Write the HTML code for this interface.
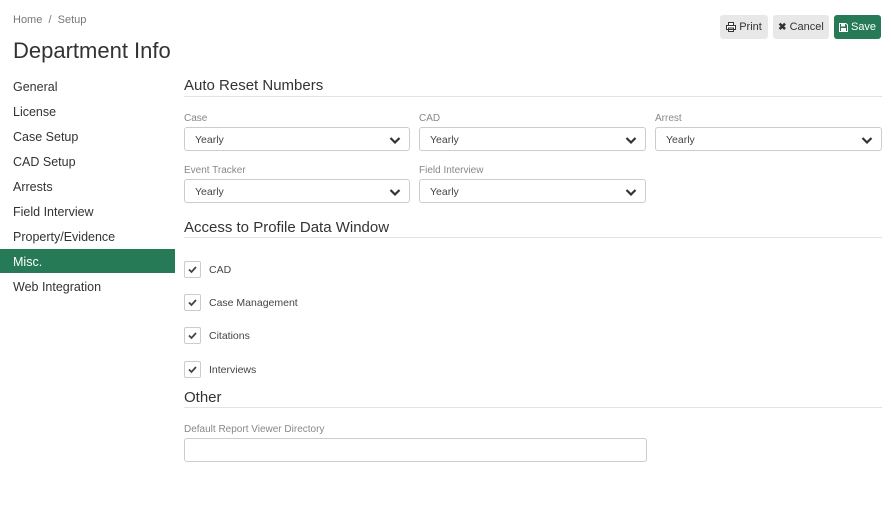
<!DOCTYPE html><html><head><style>
body{margin:0;width:891px;height:521px;background:#fff;font-family:"Liberation Sans",sans-serif;color:#333;position:relative;overflow:hidden}
.a{position:absolute;white-space:nowrap}
.bc{font-size:11px;color:#777;top:14px;left:13px}
h1{position:absolute;margin:0;top:38px;left:13px;font-size:22px;font-weight:normal;color:#333}
.nav{left:13px;font-size:12.5px;color:#333}
.btn{position:absolute;top:15px;height:24px;border-radius:3px;background:#e8e8e8;font-size:11px;color:#333;display:flex;align-items:center;justify-content:center}
.h{left:184px;font-size:15px;color:#333}
.ln{position:absolute;left:184px;width:698px;height:1px;background:#e3e3e3}
.lb{font-size:10px;color:#888}
.sel{position:absolute;border:1px solid #ccc;border-radius:3px;font-size:10.5px;color:#444;line-height:24px;padding-left:10px;box-sizing:border-box;height:24px}
.sel svg{position:absolute;right:8px;top:8px}
.cb{position:absolute;left:184px;width:15px;height:15px;border:1px solid #ccc;border-radius:2px}
.cl{left:209px;font-size:10.5px;color:#444}
</style></head><body>
<div class="a bc">Home &nbsp;/&nbsp; Setup</div>
<h1>Department Info</h1>
<div class="a nav" style="top:80px">General</div>
<div class="a nav" style="top:105px">License</div>
<div class="a nav" style="top:130px">Case Setup</div>
<div class="a nav" style="top:155px">CAD Setup</div>
<div class="a nav" style="top:180px">Arrests</div>
<div class="a nav" style="top:205px">Field Interview</div>
<div class="a nav" style="top:230px">Property/Evidence</div>
<div class="a" style="left:0;top:249px;width:175px;height:24px;background:#267a56"></div>
<div class="a nav" style="top:255px;color:#fff">Misc.</div>
<div class="a nav" style="top:280px">Web Integration</div>

<div class="btn" style="left:720px;width:48px"><svg width="10" height="10" viewBox="0 0 10 10"><path d="M2.5 0.5h5v3h-5z M0.5 3.5h9v4h-9z M2.5 6h5v3.5h-5z" fill="#fff" stroke="#333" stroke-width="1"/></svg>&nbsp;Print</div>
<div class="btn" style="left:773px;width:56px"><b style="font-size:10px">✖</b>&nbsp;Cancel</div>
<div class="btn" style="left:834px;width:47px;background:#267a56;color:#fff"><svg width="9" height="9" viewBox="0 0 9 9"><path d="M0.5 0.5h6.5l1.5 1.5v6.5h-8z" fill="none" stroke="#fff" stroke-width="1"/><rect x="2" y="1" width="4" height="2.5" fill="#fff"/><rect x="2" y="5" width="5" height="3" fill="#fff"/></svg>&nbsp;Save</div>

<div class="a h" style="top:77px">Auto Reset Numbers</div><div class="ln" style="top:96px"></div>
<div class="a lb" style="left:184px;top:113px">Case</div>
<div class="a lb" style="left:419px;top:113px">CAD</div>
<div class="a lb" style="left:655px;top:113px">Arrest</div>
<div class="a lb" style="left:184px;top:165px">Event Tracker</div>
<div class="a lb" style="left:419px;top:165px">Field Interview</div>
<div class="sel" style="left:184px;top:127px;width:226px">Yearly<svg width="12" height="9" viewBox="0 0 12 9"><path d="M1.5 2l4.5 4.5L10.5 2" stroke="#333" stroke-width="2.2" fill="none"/></svg></div>
<div class="sel" style="left:419px;top:127px;width:227px">Yearly<svg width="12" height="9" viewBox="0 0 12 9"><path d="M1.5 2l4.5 4.5L10.5 2" stroke="#333" stroke-width="2.2" fill="none"/></svg></div>
<div class="sel" style="left:655px;top:127px;width:227px">Yearly<svg width="12" height="9" viewBox="0 0 12 9"><path d="M1.5 2l4.5 4.5L10.5 2" stroke="#333" stroke-width="2.2" fill="none"/></svg></div>
<div class="sel" style="left:184px;top:179px;width:226px">Yearly<svg width="12" height="9" viewBox="0 0 12 9"><path d="M1.5 2l4.5 4.5L10.5 2" stroke="#333" stroke-width="2.2" fill="none"/></svg></div>
<div class="sel" style="left:419px;top:179px;width:227px">Yearly<svg width="12" height="9" viewBox="0 0 12 9"><path d="M1.5 2l4.5 4.5L10.5 2" stroke="#333" stroke-width="2.2" fill="none"/></svg></div>

<div class="a h" style="top:219px">Access to Profile Data Window</div><div class="ln" style="top:237px"></div>
<div class="cb" style="top:261px"><svg width="15" height="15"><path d="M4 7.5l2.5 2.5 4.5-5" stroke="#444" stroke-width="1.8" fill="none"/></svg></div><div class="a cl" style="top:264px">CAD</div>
<div class="cb" style="top:294px"><svg width="15" height="15"><path d="M4 7.5l2.5 2.5 4.5-5" stroke="#444" stroke-width="1.8" fill="none"/></svg></div><div class="a cl" style="top:297px">Case Management</div>
<div class="cb" style="top:327px"><svg width="15" height="15"><path d="M4 7.5l2.5 2.5 4.5-5" stroke="#444" stroke-width="1.8" fill="none"/></svg></div><div class="a cl" style="top:330px">Citations</div>
<div class="cb" style="top:361px"><svg width="15" height="15"><path d="M4 7.5l2.5 2.5 4.5-5" stroke="#444" stroke-width="1.8" fill="none"/></svg></div><div class="a cl" style="top:364px">Interviews</div>

<div class="a h" style="top:389px">Other</div><div class="ln" style="top:407px"></div>
<div class="a lb" style="left:184px;top:424px">Default Report Viewer Directory</div>
<div class="a" style="left:184px;top:438px;width:463px;height:24px;border:1px solid #ccc;border-radius:3px;box-sizing:border-box"></div>
</body></html>
